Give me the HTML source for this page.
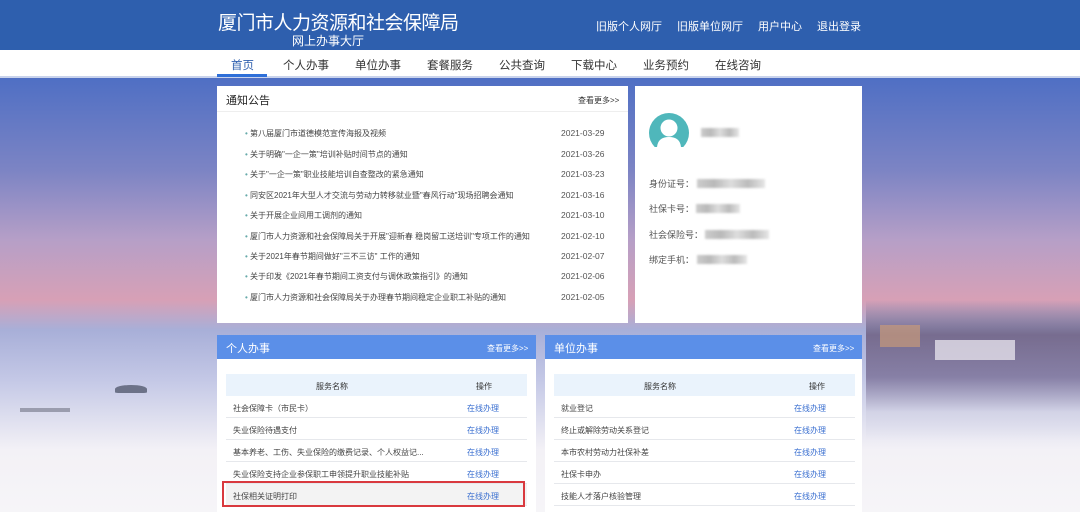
<!DOCTYPE html>
<html><head><meta charset="utf-8"><style>
*{margin:0;padding:0;box-sizing:border-box}
body{width:1080px;height:512px;overflow:hidden;position:relative;font-family:"Liberation Sans","Noto Sans CJK SC",sans-serif;color:#333;
background:linear-gradient(180deg,#4f6fc4 78px,#7c84c4 170px,#b69fc7 240px,#d7a0b6 300px,#a8afd8 330px,#c4c8e6 380px,#f3f1f6 450px,#f6f5f8 512px)}
.abs{position:absolute}
.hdr{left:0;top:0;width:1080px;height:50px;background:#2e5fae;color:#fff}
.nav{left:0;top:50px;width:1080px;height:28px;background:#fff;border-bottom:2px solid #c9d3ec}
.nav span{position:absolute;top:7px;font-size:11.5px;color:#333}
.panel{background:#fff}
.n{font-size:8px;color:#444;position:absolute;left:28px}
.d{font-size:8.5px;color:#555;position:absolute;left:344px}
.ph{height:24px;background:#5b8fe8;color:#fff}
.row{position:absolute;left:9px;width:301px;height:22px;border-bottom:1px solid #e6e8ec;font-size:8px;color:#444}
.row span{position:absolute;top:7px}
.blur{position:absolute;height:9px;background:linear-gradient(90deg,#ccc,#b9b9b9,#ddd,#bbb,#e6e6e6);filter:blur(1px)}
.dot{color:#6aa;}
</style></head><body>
<div class="abs hdr">
 <div class="abs" style="left:218px;top:8px;font-size:19px;letter-spacing:-0.5px">厦门市人力资源和社会保障局</div>
 <div class="abs" style="left:292px;top:32px;font-size:12px">网上办事大厅</div>
 <div class="abs" style="left:596px;top:18px;font-size:11px">旧版个人网厅</div>
 <div class="abs" style="left:677px;top:18px;font-size:11px">旧版单位网厅</div>
 <div class="abs" style="left:758px;top:18px;font-size:11px">用户中心</div>
 <div class="abs" style="left:817px;top:18px;font-size:11px">退出登录</div>
</div>
<div class="abs nav">
 <span style="left:231px;color:#2e5fae">首页</span>
 <div class="abs" style="left:217px;top:24px;width:50px;height:3px;background:#2e6fd8"></div>
 <span style="left:283px">个人办事</span><span style="left:355px">单位办事</span><span style="left:427px">套餐服务</span><span style="left:499px">公共查询</span><span style="left:571px">下载中心</span><span style="left:643px">业务预约</span><span style="left:715px">在线咨询</span>
</div>
<div class="abs" style="left:866px;top:300px;width:214px;height:140px;background:linear-gradient(180deg,rgba(120,100,140,0) 0%,rgba(110,96,130,.85) 25%,rgba(120,110,150,.8) 55%,rgba(200,200,220,.4) 80%,rgba(240,240,246,0) 100%)"></div>
<div class="abs" style="left:880px;top:325px;width:40px;height:22px;background:#c79a7a;opacity:.7"></div>
<div class="abs" style="left:935px;top:340px;width:80px;height:20px;background:#e4e0ea;opacity:.8"></div>
<div class="abs panel" style="left:217px;top:86px;width:411px;height:237px">
 <div class="abs" style="left:9px;top:6px;font-size:11px;color:#222">通知公告</div>
 <div class="abs" style="left:361px;top:9px;font-size:8px;color:#333">查看更多&gt;&gt;</div>
 <div class="abs" style="left:0;top:25px;width:411px;height:1px;background:#eee"></div>
 <div class="n" style="top:42px"><span class="dot">•</span> 第八届厦门市道德模范宣传海报及视频</div><div class="d" style="top:42px">2021-03-29</div>
 <div class="n" style="top:63px"><span class="dot">•</span> 关于明确"一企一策"培训补贴时间节点的通知</div><div class="d" style="top:63px">2021-03-26</div>
 <div class="n" style="top:83px"><span class="dot">•</span> 关于"一企一策"职业技能培训自查整改的紧急通知</div><div class="d" style="top:83px">2021-03-23</div>
 <div class="n" style="top:104px"><span class="dot">•</span> 同安区2021年大型人才交流与劳动力转移就业暨"春风行动"现场招聘会通知</div><div class="d" style="top:104px">2021-03-16</div>
 <div class="n" style="top:124px"><span class="dot">•</span> 关于开展企业间用工调剂的通知</div><div class="d" style="top:124px">2021-03-10</div>
 <div class="n" style="top:145px"><span class="dot">•</span> 厦门市人力资源和社会保障局关于开展"迎新春 稳岗留工送培训"专项工作的通知</div><div class="d" style="top:145px">2021-02-10</div>
 <div class="n" style="top:165px"><span class="dot">•</span> 关于2021年春节期间做好"三不三访" 工作的通知</div><div class="d" style="top:165px">2021-02-07</div>
 <div class="n" style="top:185px"><span class="dot">•</span> 关于印发《2021年春节期间工资支付与调休政策指引》的通知</div><div class="d" style="top:185px">2021-02-06</div>
 <div class="n" style="top:206px"><span class="dot">•</span> 厦门市人力资源和社会保障局关于办理春节期间稳定企业职工补贴的通知</div><div class="d" style="top:206px">2021-02-05</div>
</div>
<div class="abs panel" style="left:635px;top:86px;width:227px;height:237px">
 <svg class="abs" style="left:14px;top:27px" width="40" height="34" viewBox="0 0 40 34"><circle cx="20" cy="20" r="20" fill="#4fb7bb"/><circle cx="20" cy="15" r="8.5" fill="#fff"/><path d="M8 34 Q9 24 20 24 Q31 24 32 34Z" fill="#fff"/></svg>
 <div class="blur" style="left:66px;top:42px;width:38px"></div>
 <div class="abs" style="left:14px;top:91px;font-size:9px;color:#555">身份证号：</div><div class="blur" style="left:62px;top:93px;width:68px"></div>
 <div class="abs" style="left:14px;top:116px;font-size:9px;color:#555">社保卡号：</div><div class="blur" style="left:61px;top:118px;width:44px"></div>
 <div class="abs" style="left:14px;top:142px;font-size:9px;color:#555">社会保险号：</div><div class="blur" style="left:70px;top:144px;width:64px"></div>
 <div class="abs" style="left:14px;top:167px;font-size:9px;color:#555">绑定手机：</div><div class="blur" style="left:62px;top:169px;width:50px"></div>
</div>
<div class="abs panel" style="left:217px;top:335px;width:319px;height:177px">
 <div class="ph"><span class="abs" style="left:9px;top:5px;font-size:11px">个人办事</span><span class="abs" style="left:270px;top:8px;font-size:8px">查看更多&gt;&gt;</span></div>
 <div class="abs" style="left:9px;top:39px;width:301px;height:22px;background:#eaf3fc;font-size:8px;color:#333"><span class="abs" style="left:90px;top:7px">服务名称</span><span class="abs" style="left:250px;top:7px">操作</span></div>
 <div class="row" style="top:61px"><span style="left:7px">社会保障卡（市民卡）</span><span style="left:241px;color:#3a6fd0">在线办理</span></div>
 <div class="row" style="top:83px"><span style="left:7px">失业保险待遇支付</span><span style="left:241px;color:#3a6fd0">在线办理</span></div>
 <div class="row" style="top:105px"><span style="left:7px">基本养老、工伤、失业保险的缴费记录、个人权益记...</span><span style="left:241px;color:#3a6fd0">在线办理</span></div>
 <div class="row" style="top:127px"><span style="left:7px">失业保险支持企业参保职工申领提升职业技能补贴</span><span style="left:241px;color:#3a6fd0">在线办理</span></div>
 <div class="row" style="top:149px;background:#f3f3f3"><span style="left:7px">社保相关证明打印</span><span style="left:241px;color:#3a6fd0">在线办理</span></div>
 <div class="abs" style="left:5px;top:146px;width:303px;height:26px;border:2px solid #d9393e"></div>
</div>
<div class="abs panel" style="left:545px;top:335px;width:317px;height:177px">
 <div class="ph"><span class="abs" style="left:9px;top:5px;font-size:11px">单位办事</span><span class="abs" style="left:268px;top:8px;font-size:8px">查看更多&gt;&gt;</span></div>
 <div class="abs" style="left:9px;top:39px;width:301px;height:22px;background:#eaf3fc;font-size:8px;color:#333"><span class="abs" style="left:90px;top:7px">服务名称</span><span class="abs" style="left:255px;top:7px">操作</span></div>
 <div class="row" style="top:61px"><span style="left:7px">就业登记</span><span style="left:240px;color:#3a6fd0">在线办理</span></div>
 <div class="row" style="top:83px"><span style="left:7px">终止或解除劳动关系登记</span><span style="left:240px;color:#3a6fd0">在线办理</span></div>
 <div class="row" style="top:105px"><span style="left:7px">本市农村劳动力社保补差</span><span style="left:240px;color:#3a6fd0">在线办理</span></div>
 <div class="row" style="top:127px"><span style="left:7px">社保卡申办</span><span style="left:240px;color:#3a6fd0">在线办理</span></div>
 <div class="row" style="top:149px"><span style="left:7px">技能人才落户核验管理</span><span style="left:240px;color:#3a6fd0">在线办理</span></div>
</div>
<div class="abs" style="left:115px;top:385px;width:32px;height:8px;background:#6c7288;border-radius:50% 50% 10% 10%"></div>
<div class="abs" style="left:20px;top:408px;width:50px;height:4px;background:#9a9cae"></div>
</body></html>
